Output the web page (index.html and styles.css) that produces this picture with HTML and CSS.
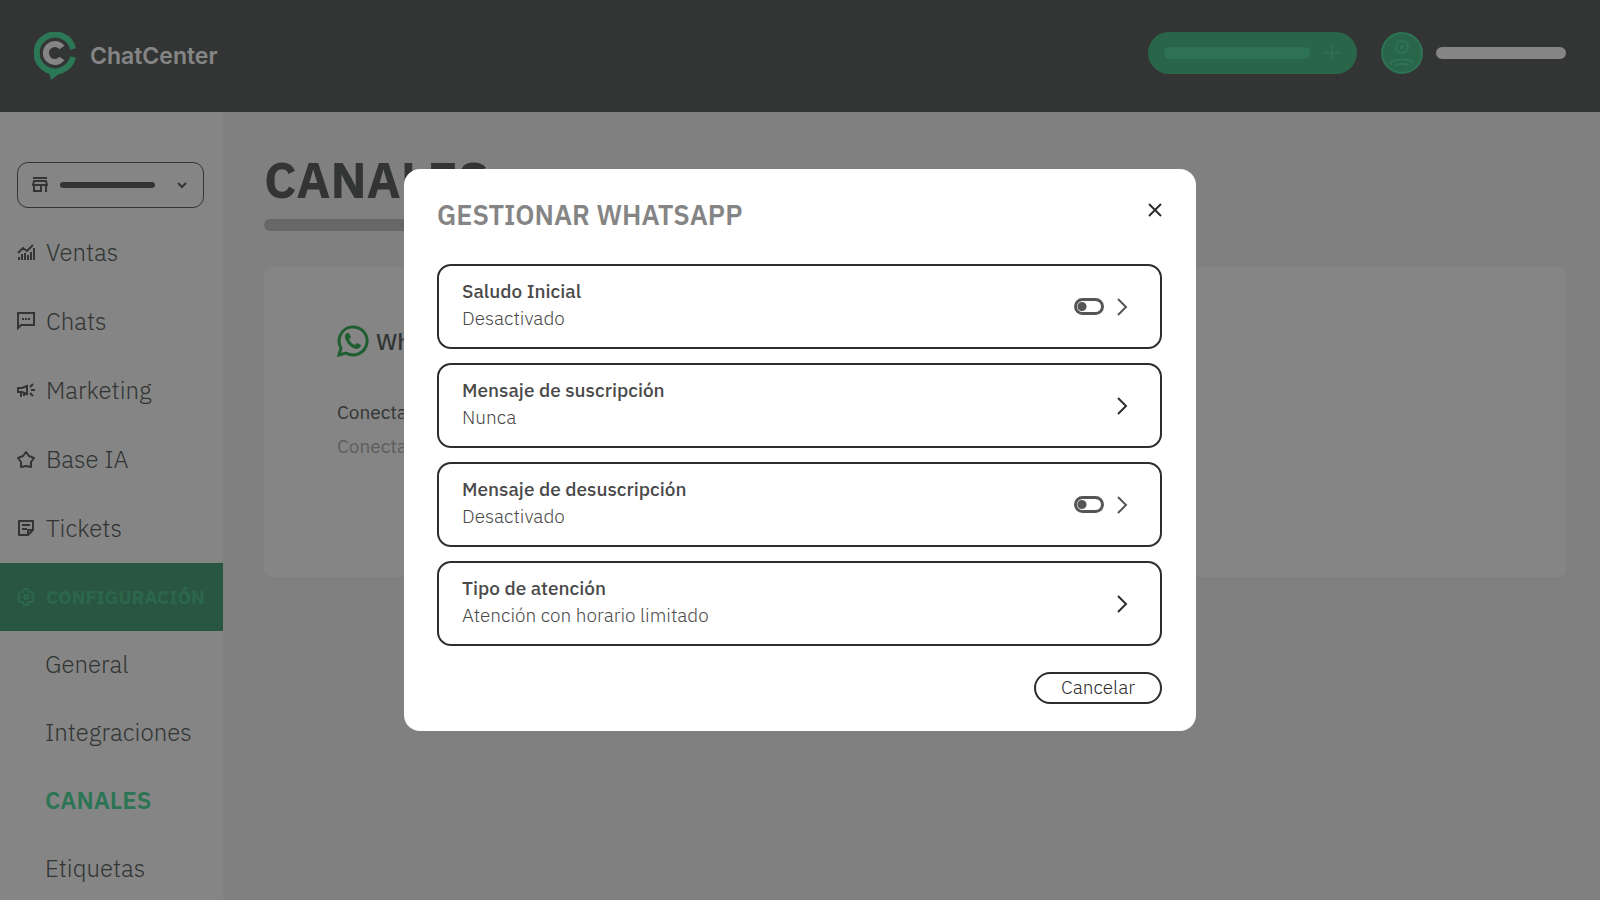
FILE: index.html
```html
<!DOCTYPE html>
<html lang="es">

<head>
    <meta charset="UTF-8">
    <meta name="viewport" content="width=device-width, initial-scale=1.0">
    <title>ChatCenter - Canales</title>
    <link rel="stylesheet" href="styles.css">
</head>

<body>

    <header class="header">
        <a class="logo" href="#">
            <svg width="44" height="48" viewBox="0 0 44 48">
                <path class="logo-ring" d="M39 17A18.4 18.4 0 1 0 39 25" />
                <path class="logo-tail" d="M14 36L17 48L30 38Z" />
                <path class="logo-c" d="M28 15.5A9 9 0 1 0 28 26.5" />
            </svg>
            <span>ChatCenter</span>
        </a>
        <div class="header-right">
            <button class="add" type="button" aria-label="Agregar">
                <span class="add-bar"></span>
                <svg width="18" height="18" viewBox="0 0 18 18">
                    <path d="M9 1V17M1 9H17" />
                </svg>
            </button>
            <a class="user" href="#" aria-label="Perfil">
                <svg width="42" height="42" viewBox="0 0 42 42">
                    <circle class="user-bg" cx="21" cy="21" r="20" />
                    <circle cx="21" cy="15" r="6" />
                    <circle cx="21" cy="15" r="1" />
                    <path d="M9 32C11 26 31 26 33 32M14 34C18 31 24 31 28 34" />
                </svg>
                <span class="user-bar"></span>
            </a>
        </div>
    </header>

    <div class="page">
        <nav class="sidebar">
            <div class="store">
                <svg width="16" height="16" viewBox="0 0 16 16">
                    <path d="M1 1H15M2 4H14L15 8H1ZM2 8V14H9V8M14 8V15" />
                </svg>
                <span class="store-bar"></span>
                <svg width="12" height="8" viewBox="0 0 12 8">
                    <path d="M2 2L6 6L10 2" />
                </svg>
                <select class="store-select" name="store" aria-label="Tienda">
                    <option value=""></option>
                </select>
            </div>

            <ul class="menu">
                <li><a class="menu-item" href="#">
                        <svg viewBox="0 0 18 18">
                            <path d="M1 10L6 5L10 8L16 2M2 17V14M5 17V11M8 17V10M11 17V12M14 17V9M17 17V5" />
                        </svg>Ventas</a></li>
                <li><a class="menu-item" href="#">
                        <svg viewBox="0 0 18 18">
                            <path d="M1 16V1H17V13H4Z" />
                            <path d="M5 7H7M8 7H10M11 7H13" />
                        </svg>Chats</a></li>
                <li><a class="menu-item" href="#">
                        <svg viewBox="0 0 18 18">
                            <path d="M1 7H5L10 5V13L5 11H1ZM4 11V16M7 12V15M13 6L16 3M14 9H18M13 12L16 15" />
                        </svg>Marketing</a></li>
                <li><a class="menu-item" href="#">
                        <svg viewBox="0 0 18 18">
                            <path stroke-linejoin="round" d="M9 2L12 6L17 8L14 12V17L9 16L4 17V12L1 8L6 6Z" />
                        </svg>Base IA</a></li>
                <li><a class="menu-item" href="#">
                        <svg viewBox="0 0 18 18">
                            <path stroke-linejoin="round" d="M2 2H16V11L11 16H2ZM5 6H13M5 10H10M11 16V11H16" />
                        </svg>Tickets</a></li>
                <li><a class="menu-item menu-open" href="#">
                        <svg viewBox="0 0 18 18">
                            <path d="M7 1H11L12 4L15 4L17 7L15 9L17 11L15 14L12 14L11 17H7L6 14L3 14L1 11L3 9L1 7L3 4L6 4Z" />
                            <circle cx="9" cy="9" r="2" />
                        </svg>CONFIGURACIÓN</a></li>
            </ul>
            <ul class="submenu">
                <li><a class="submenu-item" href="#">General</a></li>
                <li><a class="submenu-item" href="#">Integraciones</a></li>
                <li><a class="submenu-item submenu-active" href="#">CANALES</a></li>
                <li><a class="submenu-item" href="#">Etiquetas</a></li>
            </ul>
        </nav>

        <main class="content">
            <h1>CANALES</h1>
            <div class="title-bar"></div>
            <section class="card">
                <h2>
                    <svg width="32" height="32" viewBox="0 0 32 32">
                        <path class="wa-bubble" d="M2 30L4 23A14 14 0 1 1 9 28Z" />
                        <path class="wa-phone" d="M10 8C8 9 7 12 9 15C11 20 15 23 19 24C22 24 24 22 24 20L20 18L18 20C15 19 13 17 12 14L14 12L12 8Z" />
                    </svg>
                    WhatsApp
                </h2>
                <p>Conectado</p>
                <p class="muted">Conectado</p>
            </section>
        </main>
    </div>

    <div class="overlay">
        <div class="modal" role="dialog" aria-modal="true" aria-labelledby="modalTitle">
            <div class="modal-head">
                <h2 id="modalTitle">GESTIONAR WHATSAPP</h2>
                <button class="close" type="button" aria-label="Cerrar">
                    <svg width="14" height="14" viewBox="0 0 14 14">
                        <path d="M1 1L13 13M13 1L1 13" />
                    </svg>
                </button>
            </div>

            <div class="options">
                <div class="option option-off">
                    <div class="option-text">
                        <label for="saludo">Saludo Inicial</label>
                        <span>Desactivado</span>
                    </div>
                    <input class="switch" type="checkbox" id="saludo" name="saludo">
                    <button class="arrow" type="button" aria-label="Abrir saludo inicial">
                        <svg width="12" height="18" viewBox="0 0 12 18">
                            <path d="M2 1L10 9L2 17" />
                        </svg>
                    </button>
                </div>
                <div class="option">
                    <div class="option-text">
                        <strong>Mensaje de suscripción</strong>
                        <span>Nunca</span>
                    </div>
                    <button class="arrow" type="button" aria-label="Abrir mensaje de suscripción">
                        <svg width="12" height="18" viewBox="0 0 12 18">
                            <path d="M2 1L10 9L2 17" />
                        </svg>
                    </button>
                </div>
                <div class="option option-off">
                    <div class="option-text">
                        <label for="desuscripcion">Mensaje de desuscripción</label>
                        <span>Desactivado</span>
                    </div>
                    <input class="switch" type="checkbox" id="desuscripcion" name="desuscripcion">
                    <button class="arrow" type="button" aria-label="Abrir mensaje de desuscripción">
                        <svg width="12" height="18" viewBox="0 0 12 18">
                            <path d="M2 1L10 9L2 17" />
                        </svg>
                    </button>
                </div>
                <div class="option">
                    <div class="option-text">
                        <strong>Tipo de atención</strong>
                        <span>Atención con horario limitado</span>
                    </div>
                    <button class="arrow" type="button" aria-label="Abrir tipo de atención">
                        <svg width="12" height="18" viewBox="0 0 12 18">
                            <path d="M2 1L10 9L2 17" />
                        </svg>
                    </button>
                </div>
            </div>

            <button class="cancel" type="button">Cancelar</button>
        </div>
    </div>

</body>

</html>
```
FILE: styles.css
```css
* {
    box-sizing: border-box;
}

body {
    margin: 0;
    height: 100vh;
    display: flex;
    flex-direction: column;
    overflow: hidden;
    background-color: #f6f6f6;
    font-family: "IBM Plex Sans", Roboto, "Noto Sans", sans-serif;
    color: #606663;
}

h1,
h2,
p,
ul {
    margin: 0;
    padding: 0;
}

ul {
    list-style: none;
}

a {
    color: inherit;
    text-decoration: none;
}

button {
    padding: 0;
    border: 0;
    background: none;
    font-family: inherit;
    cursor: pointer;
}

svg {
    flex-shrink: 0;
    fill: none;
    stroke: currentColor;
    stroke-width: 2;
}

/* header */
.header {
    flex-shrink: 0;
    height: 112px;
    padding: 32px 34px 0;
    display: flex;
    justify-content: space-between;
    align-items: flex-start;
    background-color: #606663;
}

.logo {
    display: flex;
    align-items: center;
    gap: 12px;
    font-family: Inter, sans-serif;
    font-size: 23px;
    font-weight: 600;
    color: #fff;
}

.logo-ring {
    stroke: #55e6a5;
    stroke-width: 6;
}

.logo-tail {
    fill: #55e6a5;
    stroke: none;
}

.logo-c {
    stroke: #fff;
    stroke-width: 6;
}

.header-right {
    display: flex;
    align-items: center;
    gap: 24px;
}

.add {
    width: 209px;
    height: 42px;
    padding: 0 16px;
    display: flex;
    align-items: center;
    justify-content: space-between;
    border-radius: 21px;
    background-color: #50c48c;
    color: #5fd09b;
}

.add-bar {
    width: 146px;
    height: 12px;
    border-radius: 6px;
    background-color: #57dca0;
}

.user {
    display: flex;
    align-items: center;
    gap: 13px;
    color: #58dca2;
}

.user-bg {
    fill: #50c48c;
}

.user-bar {
    width: 130px;
    height: 12px;
    border-radius: 6px;
    background-color: #fff;
}

/* sidebar */
.page {
    flex: 1;
    min-height: 0;
    display: flex;
}

.sidebar {
    flex-shrink: 0;
    width: 223px;
    padding-top: 50px;
    overflow: hidden;
    background-color: #fff;
}

.store {
    height: 46px;
    margin: 0 19px 10px 17px;
    padding: 0 15px 0 14px;
    display: flex;
    align-items: center;
    position: relative;
    border: 1px solid #606663;
    border-radius: 11px;
}

.store-bar {
    width: 95px;
    height: 6px;
    margin: 0 auto 0 12px;
    border-radius: 3px;
    background-color: #606663;
}

.store-select {
    position: absolute;
    inset: 0;
    width: 100%;
    border: 0;
    appearance: none;
    background: none;
}

.menu {
    display: grid;
    gap: 1px;
}

.menu-item,
.submenu-item {
    height: 68px;
    display: flex;
    align-items: center;
    font-size: 24px;
    font-weight: 300;
}

.menu-item {
    padding-left: 17px;
    gap: 11px;
}

.menu-item svg {
    width: 18px;
    height: 18px;
}

.menu-open {
    background-color: #50a580;
    color: #55c490;
    font-size: 19px;
    font-weight: 700;
}

.submenu-item {
    padding: 0 0 2px 45px;
}

.submenu-active {
    color: #55e0a2;
    font-weight: 600;
}

/* content */
.content {
    flex: 1;
    padding: 40px 34px 0 41px;
}

h1 {
    font-size: 50px;
    line-height: 56px;
    font-weight: 700;
}

.title-bar {
    width: 300px;
    height: 12px;
    margin: 11px 0 36px;
    border-radius: 6px;
    background-color: #c6c6c6;
}

.card {
    height: 310px;
    padding: 57px 73px;
    border-radius: 8px;
    background-color: #fff;
    font-size: 19px;
    line-height: 34px;
}

.card h2 {
    margin-bottom: 37px;
    display: flex;
    align-items: center;
    gap: 7px;
    font-size: 23px;
    font-weight: 500;
}

.card .muted {
    color: #b4b4b4;
}

.wa-bubble {
    stroke: #3db45f;
    stroke-width: 3;
}

.wa-phone {
    fill: #3db45f;
    stroke: none;
}

/* modal */
.overlay {
    position: fixed;
    inset: 0;
    display: flex;
    align-items: center;
    justify-content: center;
    background-color: rgba(0, 0, 0, 0.48);
}

.modal {
    width: 792px;
    max-width: 90%;
    padding: 26px 34px 27px 33px;
    display: flex;
    flex-direction: column;
    border-radius: 16px;
    background-color: #fff;
    color: #4a4a4a;
}

.modal-head {
    margin-bottom: 29px;
    display: flex;
    justify-content: space-between;
    align-items: flex-start;
}

.modal-head h2 {
    font-size: 27px;
    line-height: 40px;
    font-weight: 600;
    color: #858585;
}

.close {
    width: 14px;
    height: 34px;
    color: #2d2d2d;
}

.options {
    display: grid;
    gap: 14px;
}

.option {
    height: 85px;
    padding: 0 32px 0 23px;
    display: flex;
    align-items: center;
    gap: 12px;
    border: 2px solid #2d2d2d;
    border-radius: 14px;
    font-size: 19px;
    line-height: 27px;
}

.option-text {
    flex: 1;
    padding-bottom: 3px;
    display: flex;
    flex-direction: column;
}

.option-text label,
.option-text strong {
    font-weight: 500;
}

.option-text span {
    font-weight: 300;
}

.switch {
    width: 30px;
    height: 17px;
    margin: 0;
    border: 3px solid #555;
    border-radius: 9px;
    appearance: none;
    background: radial-gradient(circle at 5px 50%, #555 4px, transparent 5px);
}

.switch:checked {
    background: radial-gradient(circle at 19px 50%, #555 4px, transparent 5px);
}

.arrow {
    height: 18px;
    color: #2d2d2d;
}

.option-off .arrow {
    color: #555;
}

.cancel {
    align-self: flex-end;
    width: 128px;
    height: 32px;
    padding-bottom: 2px;
    margin-top: 26px;
    border: 2px solid #2d2d2d;
    border-radius: 16px;
    font-size: 19px;
    font-weight: 300;
    color: #2d2d2d;
}
```
